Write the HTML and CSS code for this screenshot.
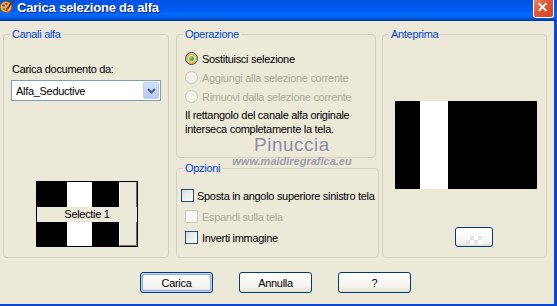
FILE: index.html
```html
<!DOCTYPE html>
<html lang="it">
<head>
  <meta charset="UTF-8">
  <title>Carica selezione da alfa</title>
  <link rel="stylesheet" href="styles.css">
</head>
<body>
  <div class="window">
    <div class="titlebar">
      <svg class="app-icon" viewBox="0 0 14 14" width="14" height="14">
        <ellipse cx="6" cy="7" rx="6" ry="5.5" fill="#F2B24A" stroke="#9A5A12" stroke-width="1"/>
        <circle cx="3.5" cy="5.5" r="1.3" fill="#2F5FD8"/>
        <circle cx="6.5" cy="4" r="1.2" fill="#D8322A"/>
        <circle cx="4" cy="9" r="1.2" fill="#3BA83B"/>
        <path d="M13 1 L7 9" stroke="#6B3A12" stroke-width="2"/>
        <path d="M7.6 8.2 L6 11" stroke="#D8322A" stroke-width="2"/>
      </svg>
      <span class="title">Carica selezione da alfa</span>
      <div class="close">
        <svg viewBox="0 0 21 18" width="21" height="18">
          <path d="M6 4 L14 12 M14 4 L6 12" stroke="#fff" stroke-width="2"/>
        </svg>
      </div>
    </div>

    <div class="content">
      <div class="groups">
        <fieldset class="group group-canali">
          <legend>Canali alfa</legend>
          <div class="field-label">Carica documento da:</div>
          <div class="combo">
            <span class="combo-text">Alfa_Seductive</span>
            <span class="combo-btn">
              <svg viewBox="0 0 9 6" width="9" height="6">
                <path d="M1 1 L4.5 4.5 L8 1" fill="none" stroke="#4D6185" stroke-width="2"/>
              </svg>
            </span>
          </div>
          <div class="thumb">
            <div class="thumb-row"><div class="thumb-img"></div><div class="thumb-side"></div></div>
            <div class="thumb-label">Selectie 1</div>
            <div class="thumb-row bottom"><div class="thumb-img"></div><div class="thumb-side"></div></div>
          </div>
        </fieldset>

        <div class="middle">
          <fieldset class="group group-op">
            <legend>Operazione</legend>
            <div class="options">
              <div class="opt"><span class="radio checked"></span>Sostituisci selezione</div>
              <div class="opt disabled"><span class="radio"></span>Aggiungi alla selezione corrente</div>
              <div class="opt disabled"><span class="radio"></span>Rimuovi dalla selezione corrente</div>
            </div>
            <p class="info">Il rettangolo del canale alfa originale interseca completamente la tela.</p>
          </fieldset>

          <fieldset class="group group-opz">
            <legend>Opzioni</legend>
            <div class="checks">
              <div class="chk first"><span class="box"></span>Sposta in angolo superiore sinistro tela</div>
              <div class="chk disabled"><span class="box"></span>Espandi sulla tela</div>
              <div class="chk"><span class="box"></span>Inverti immagine</div>
            </div>
          </fieldset>
        </div>

        <fieldset class="group group-ant">
          <legend>Anteprima</legend>
          <div class="preview"></div>
          <div class="bg-btn"><span class="checker"></span></div>
        </fieldset>
      </div>

      <div class="actions">
        <button class="btn default">Carica</button>
        <button class="btn">Annulla</button>
        <button class="btn">?</button>
      </div>
    </div>

    <div class="watermark">
      <div class="wm-name">Pinuccia</div>
      <div class="wm-site">www.maidiregrafica.eu</div>
    </div>
  </div>
</body>
</html>
```

FILE: styles.css
```css
* {
  box-sizing: border-box;
}
body {
  margin: 0;
  background: #ECE9D8;
  font-family: "Liberation Sans", Arial, sans-serif;
  font-size: 11px;
  letter-spacing: -0.3px;
  color: #000;
}
.window {
  position: relative;
  width: 557px;
  height: 306px;
  overflow: hidden;
}

/* barra del titolo */
.titlebar {
  height: 21px;
  display: flex;
  align-items: flex-start;
  color: #fff;
  background: linear-gradient(#0055E6 0%, #0056EA 30%, #005BF5 50%, #026AFE 66%, #0062EF 80%, #0052D6 90%, #0040AB 95%, #003092 100%);
}
.app-icon {
  margin: 0 3px 0 0;
}
.title {
  font-weight: bold;
  font-size: 13px;
  line-height: 15px;
  letter-spacing: -0.2px;
  text-shadow: 1px 1px #0A1E8C;
}
.close {
  margin-left: auto;
  margin-right: 3px;
  width: 21px;
  height: 18px;
  border: 1px solid #fff;
  border-top: none;
  border-radius: 0 0 3px 3px;
  background: linear-gradient(135deg, #F08A6A 0%, #E25A35 40%, #D2401E 100%);
  display: flex;
}
.close svg {
  margin: -1px 0 0 -1px;
}

.content {
  height: 285px;
  border-right: 3px solid #0846D8;
  border-bottom: 2px solid #0846D8;
  padding: 7px 0 0 3px;
}
.groups {
  display: flex;
  height: 230px;
}
.group {
  margin: 0;
  padding: 0;
  min-width: 0;
  border: 1px solid #D0D0BF;
  border-radius: 4px;
}
.group legend {
  margin-left: 6px;
  padding: 0 2px;
  line-height: 13px;
  color: #0046D5;
}

/* canali alfa */
.group-canali {
  width: 166px;
}
.field-label {
  margin: 22px 0 0 8px;
  line-height: 13px;
}
.combo {
  margin: 4px 0 0 7px;
  width: 150px;
  height: 21px;
  border: 1px solid #7F9DB9;
  background: #fff;
  display: flex;
  align-items: center;
  padding: 1px;
}
.combo-text {
  flex: 1;
  padding-left: 3px;
}
.combo-btn {
  width: 16px;
  height: 17px;
  border: 1px solid #BBCEF8;
  border-radius: 2px;
  background: linear-gradient(#D3E0FD, #B7CBF7);
  display: flex;
  align-items: center;
  justify-content: center;
}
.thumb {
  margin: 80px 0 0 32px;
  width: 102px;
  height: 66px;
  border: 1px solid #000;
  background: #ECE9D8;
}
.thumb-row {
  display: flex;
  height: 25px;
}
.thumb-row.bottom {
  height: 24px;
}
.thumb-img {
  width: 82px;
  background: linear-gradient(to right, #000 0 30px, #fff 30px 55px, #000 55px);
}
.thumb-side {
  flex: 1;
  border-left: 1px solid #fff;
  border-right: 1px solid #716F64;
}
.thumb-row.bottom .thumb-side {
  border-bottom: 1px solid #716F64;
}
.thumb-label {
  height: 15px;
  line-height: 15px;
  text-align: center;
}

/* colonna centrale */
.middle {
  margin-left: 7px;
  width: 203px;
  display: flex;
  flex-direction: column;
}
.group-op {
  width: 200px;
  height: 130px;
}
.group-opz {
  margin-top: 4px;
  flex: 1;
}
.options {
  margin: 8px 0 0 8px;
}
.opt {
  height: 19px;
  display: flex;
  align-items: center;
  gap: 4px;
}
.disabled {
  color: #ACA899;
}
.radio {
  width: 13px;
  height: 13px;
  border-radius: 50%;
  border: 1px solid #1C5180;
  background: linear-gradient(135deg, #DCDCD7, #fff);
  display: flex;
  align-items: center;
  justify-content: center;
}
.radio.checked {
  box-shadow: inset 0 0 0 2px #F8B636;
}
.radio.checked::after {
  content: "";
  width: 5px;
  height: 5px;
  border-radius: 50%;
  background: radial-gradient(circle at 35% 35%, #8FE08F, #21A121 70%);
}
.opt.disabled .radio {
  border-color: #CAC8BB;
  background: #F3F1E8;
}
.info {
  margin: 2px 0 0 8px;
  line-height: 14px;
  width: 180px;
}

.checks {
  margin-top: 10px;
}
.chk {
  height: 21px;
  display: flex;
  align-items: center;
  gap: 4px;
  padding-left: 8px;
}
.chk.first {
  padding-left: 4px;
  gap: 3px;
}
.box {
  width: 13px;
  height: 13px;
  border: 1px solid #1C5180;
  background: linear-gradient(135deg, #DCDCD7, #fff);
}
.chk.disabled .box {
  border-color: #CAC8BB;
  background: #FAF9F4;
}

/* anteprima */
.group-ant {
  margin-left: 3px;
  width: 165px;
}
.preview {
  margin: 60px 0 0 12px;
  width: 142px;
  height: 88px;
  background: linear-gradient(to right, #000 0 25px, #fff 25px 53px, #000 53px);
}
.bg-btn {
  margin: 38px 0 0 72px;
  width: 38px;
  height: 20px;
  border: 1px solid #003C74;
  border-radius: 3px;
  background: linear-gradient(#fff, #F4F3EE 80%, #E3E0D5);
  display: flex;
  justify-content: center;
  align-items: flex-end;
  padding-bottom: 2px;
}
.checker {
  width: 16px;
  height: 8px;
  background: conic-gradient(#E4E4E4 0 25%, #fff 0 50%, #E4E4E4 0 75%, #fff 0) 0 0 / 8px 8px;
}

/* pulsanti */
.actions {
  margin-top: 14px;
  padding-right: 6px;
  display: flex;
  justify-content: center;
  gap: 26px;
}
.btn {
  width: 73px;
  height: 21px;
  padding: 0;
  font: inherit;
  letter-spacing: -0.3px;
  color: #000;
  border: 1px solid #003C74;
  border-radius: 3px;
  background: linear-gradient(#fff, #F4F3EE 70%, #E5E1D6);
}
.btn.default {
  box-shadow: inset 0 0 0 1px #C4D6F7, inset 0 0 0 2px #8DAAE6;
}

/* filigrana */
.watermark {
  position: absolute;
  left: 231px;
  top: 136px;
  width: 122px;
  text-align: center;
  color: #8A8AA2;
  pointer-events: none;
}
.wm-name {
  font-size: 19px;
  line-height: 17px;
  letter-spacing: 0.5px;
  text-shadow: 1px 1px rgba(255, 255, 255, 0.6);
}
.wm-site {
  margin-top: 2px;
  font-size: 11px;
  line-height: 12px;
  font-weight: bold;
  font-style: italic;
  letter-spacing: 0;
  opacity: 0.8;
}
```
